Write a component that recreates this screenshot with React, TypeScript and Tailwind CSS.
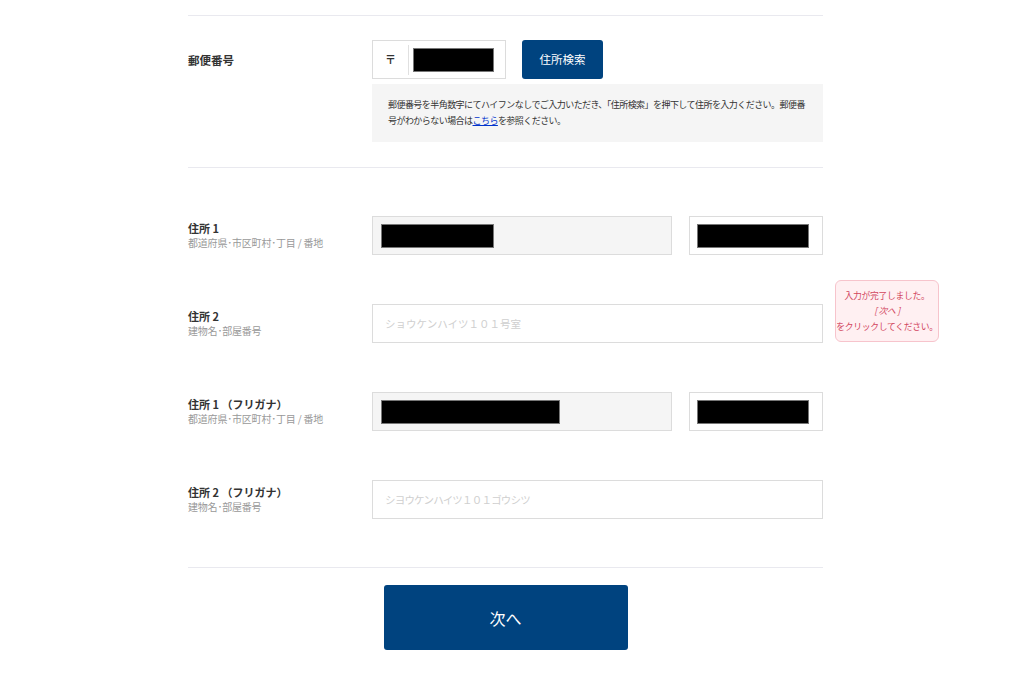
import React from "react";

const font = { fontFamily: '"Noto Sans CJK JP", "Noto Sans", sans-serif' };

function Redact({ w }: { w: string }) {
  return <div className={`h-[24px] ${w} bg-black border border-[#777]`} />;
}

function Label({ title, sub }: { title: string; sub?: string }) {
  return (
    <div className="w-[184px] shrink-0 flex flex-col justify-center">
      <div className="text-[11px] leading-[15px] font-bold text-[#333]">{title}</div>
      {sub && <div className="text-[10px] leading-[14px] text-[#999] tracking-[-0.2px]">{sub}</div>}
    </div>
  );
}

export default function App() {
  return (
    <div className="min-h-[682px] bg-white" style={font}>
      <div className="ml-[188px] w-[635px] pt-[15px]">
        <div className="h-px bg-[#e9e9ef]" />

        {/* postal */}
        <div className="flex pt-[24px] pb-[25px]">
          <div className="w-[184px] shrink-0 pt-[12px] text-[11.5px] font-bold text-[#333]">郵便番号</div>
          <div className="flex-1 flex flex-col gap-[5px]">
            <div className="flex gap-[16px]">
              <div className="w-[134px] h-[39px] border border-[#dcdcdc] flex items-center">
                <div className="w-[36px] h-[30px] flex items-center justify-center text-[11px] font-bold text-[#333] border-r border-[#e0e0e0]">〒</div>
                <div className="pl-[4px]"><Redact w="w-[81px]" /></div>
              </div>
              <button className="w-[81px] h-[39px] rounded-[3px] bg-[#00437f] text-white text-[11.5px]">住所検索</button>
            </div>
            <div className="h-[58px] bg-[#f5f5f5] px-[16px] flex items-center">
              <p className="text-[9px] leading-[16px] text-[#333] tracking-[-0.55px] whitespace-nowrap">
                郵便番号を半角数字にてハイフンなしでご入力いただき、「住所検索」を押下して住所を入力ください。郵便番<br />
                号がわからない場合は<span className="text-[#0033cc] underline">こちら</span>を参照ください。
              </p>
            </div>
          </div>
        </div>

        <div className="h-px bg-[#e9e9ef]" />

        <div className="flex flex-col gap-[49px] pt-[48px] pb-[48px]">
          <div className="flex h-[39px]">
            <Label title="住所 1" sub="都道府県･市区町村･丁目 / 番地" />
            <div className="flex gap-[17px]">
              <div className="w-[300px] h-[39px] bg-[#f5f5f5] border border-[#dcdcdc] flex items-center pl-[8px]">
                <Redact w="w-[113px]" />
              </div>
              <div className="w-[134px] h-[39px] border border-[#dcdcdc] flex items-center pl-[7px]">
                <Redact w="w-[112px]" />
              </div>
            </div>
          </div>

          <div className="flex h-[39px] relative">
            <Label title="住所 2" sub="建物名･部屋番号" />
            <div className="w-[451px] h-[39px] border border-[#dcdcdc] flex items-center pl-[12px] text-[10.5px] text-[#cfcfcf]">
              ショウケンハイツ１０１号室
            </div>
            <div className="absolute left-[647px] top-[-24px] w-[104px] h-[62px] rounded-[6px] border border-[#f7c4cc] bg-[#fff0f2] flex flex-col items-center justify-center text-[8.8px] leading-[15.5px] text-[#d2455d] tracking-[-0.3px] whitespace-nowrap">
              <div>入力が完了しました。</div>
              <div className="italic">[ 次へ ]</div>
              <div>をクリックしてください。</div>
            </div>
          </div>

          <div className="flex h-[39px]">
            <Label title="住所 1 （フリガナ）" sub="都道府県･市区町村･丁目 / 番地" />
            <div className="flex gap-[17px]">
              <div className="w-[300px] h-[39px] bg-[#f5f5f5] border border-[#dcdcdc] flex items-center pl-[8px]">
                <Redact w="w-[179px]" />
              </div>
              <div className="w-[134px] h-[39px] border border-[#dcdcdc] flex items-center pl-[7px]">
                <Redact w="w-[112px]" />
              </div>
            </div>
          </div>

          <div className="flex h-[39px]">
            <Label title="住所 2 （フリガナ）" sub="建物名･部屋番号" />
            <div className="w-[451px] h-[39px] border border-[#dcdcdc] flex items-center pl-[12px] text-[10.5px] text-[#cfcfcf] tracking-[-0.8px]">
              シヨウケンハイツ１０１ゴウシツ
            </div>
          </div>
        </div>

        <div className="h-px bg-[#e9e9ef]" />

        <div className="flex justify-center pt-[17px]">
          <button className="w-[244px] h-[65px] rounded-[3px] bg-[#00437f] text-white text-[16px]">次へ</button>
        </div>
      </div>
    </div>
  );
}
